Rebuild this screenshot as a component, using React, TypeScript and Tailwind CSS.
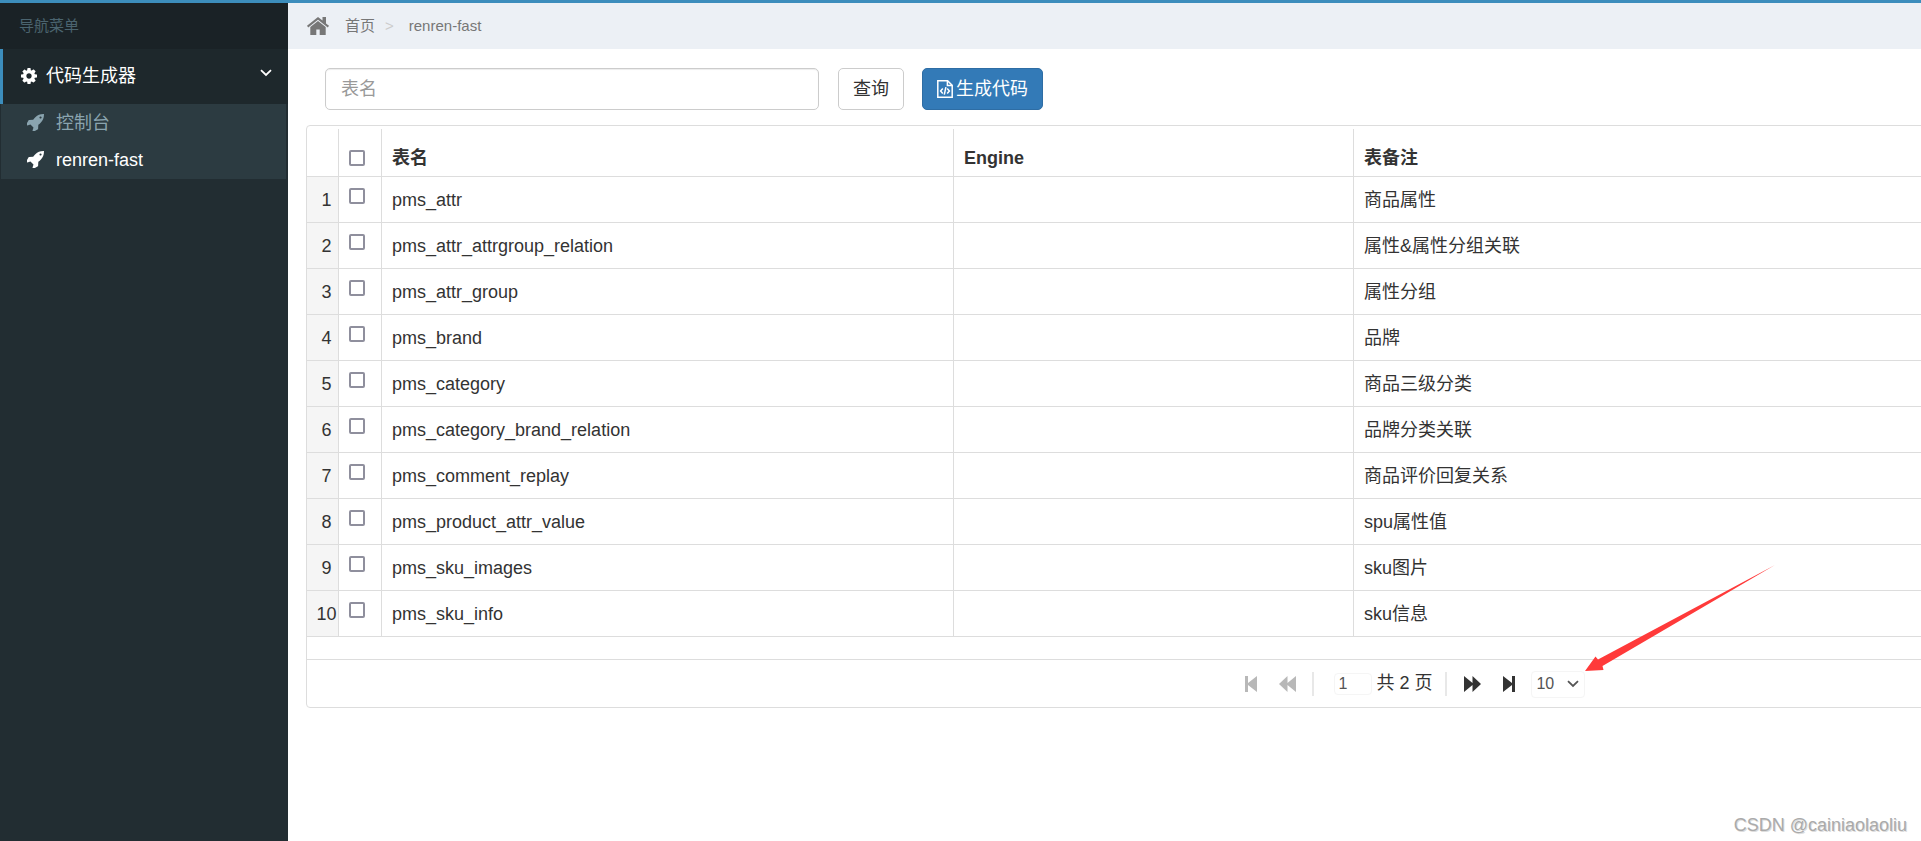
import { useState } from "react";

interface TableRow {
  name: string;
  engine: string;
  comment: string;
}

const rows: TableRow[] = [
  { name: "pms_attr", engine: "", comment: "商品属性" },
  { name: "pms_attr_attrgroup_relation", engine: "", comment: "属性&属性分组关联" },
  { name: "pms_attr_group", engine: "", comment: "属性分组" },
  { name: "pms_brand", engine: "", comment: "品牌" },
  { name: "pms_category", engine: "", comment: "商品三级分类" },
  { name: "pms_category_brand_relation", engine: "", comment: "品牌分类关联" },
  { name: "pms_comment_replay", engine: "", comment: "商品评价回复关系" },
  { name: "pms_product_attr_value", engine: "", comment: "spu属性值" },
  { name: "pms_sku_images", engine: "", comment: "sku图片" },
  { name: "pms_sku_info", engine: "", comment: "sku信息" }
];

const checkboxClass =
  "block h-4 w-4 appearance-none rounded-[2px] border-2 border-[#8f8f9d] bg-white checked:bg-[#337ab7]";

function RocketIcon() {
  return (
    <svg viewBox="96 128 1568 1568" className="h-[17px] w-[17px]" fill="currentColor">
      <path d="M1440 448q0-40-28-68t-68-28-68 28-28 68 28 68 68 28 68-28 28-68zm224-288q0 249-75.500 430.500t-253.500 360.500q-81 80-195 176l-20 379q-2 16-16 26l-384 224q-7 4-16 4-12 0-23-9l-64-64q-13-14-8-32l85-276-281-281-276 85q-3 1-9 1-14 0-23-9l-64-64q-17-19-5-39l224-384q10-14 26-16l379-20q96-114 176-195 188-187 358-258t431-71q14 0 24 9.500t10 22.500z" />
    </svg>
  );
}

function GearIcon() {
  return (
    <svg viewBox="128 128 1536 1536" className="h-4 w-4" fill="currentColor">
      <path d="M1152 896q0-106-75-181t-181-75-181 75-75 181 75 181 181 75 181-75 75-181zm512-109v222q0 12-8 23t-20 13l-185 28q-19 54-39 91 35 50 107 138 10 12 10 25t-9 23q-27 37-99 108t-94 71q-12 0-26-9l-138-108q-44 23-91 38-16 136-29 186-7 28-36 28h-222q-14 0-24.500-8.500t-11.500-21.500l-28-184q-49-16-90-37l-141 107q-10 9-25 9-14 0-25-11-126-114-165-168-7-10-7-23 0-12 8-23 15-21 51-66.500t54-70.500q-27-50-41-99l-183-27q-13-2-21-12.500t-8-23.500v-222q0-12 8-23t19-13l186-28q14-46 39-92-40-57-107-138-10-12-10-24 0-10 9-23 26-36 98.500-107.500t94.500-71.500q13 0 26 10l138 107q44-23 91-38 16-136 29-186 7-28 36-28h222q14 0 24.500 8.500t11.500 21.500l28 184q49 16 90 37l142-107q9-9 24-9 13 0 25 10 129 119 165 170 7 8 7 22 0 12-8 23-15 21-51 66.500t-54 70.500q26 50 41 98l183 28q13 2 21 12.500t8 23.500z" />
    </svg>
  );
}

function Sidebar() {
  return (
    <aside className="w-72 shrink-0 bg-[#222d32]">
      <div className="flex h-[46px] items-center bg-[#1a2226] pl-[19px] text-[15px] text-[#4b646f]">
        导航菜单
      </div>
      <nav>
        <a
          href="#generator"
          className="flex h-[55px] items-center border-l-3 border-[#3c8dbc] bg-[#1e282c] pr-4 pb-[2px] pl-[18px] text-white"
        >
          <GearIcon />
          <span className="ml-[9px] flex-1">代码生成器</span>
          <svg viewBox="0 0 12 8" className="mb-[6px] h-2 w-3" fill="none" stroke="currentColor" strokeWidth="1.800">
            <path d="M1 1.200 6 6l5-4.800" />
          </svg>
        </a>
        <ul className="mr-[2px] ml-px bg-[#2c3b41] pb-px">
          <li>
            <a href="#console" className="flex h-[37px] items-center pl-[26px] text-[#8aa4af]">
              <RocketIcon />
              <span className="ml-3">控制台</span>
            </a>
          </li>
          <li>
            <a href="#renren-fast" className="flex h-[37px] items-center pl-[26px] text-white">
              <RocketIcon />
              <span className="ml-3">renren-fast</span>
            </a>
          </li>
        </ul>
      </nav>
    </aside>
  );
}

function Breadcrumb() {
  return (
    <div className="flex h-[46px] items-center bg-[#ecf0f5] pb-px pl-[19px] text-[15px] text-[#777]">
      <svg viewBox="0 0 22 18" className="h-[18px] w-[22px]" fill="currentColor">
        <path d="M11 0 0 8.800 1.200 10.600 11 2.700l9.800 7.900L22 8.800l-3-2.400V0h-3.500v3.600z" />
        <path d="M11 3.900 3.300 10.100V18h6v-5.400h3.400V18h6v-7.900z" />
      </svg>
      <a href="#home" className="ml-4">
        首页
      </a>
      <span className="ml-[10px] text-[#ccc]">&gt;</span>
      <span className="ml-[15px]">renren-fast</span>
    </div>
  );
}

function Pager() {
  const [page, setPage] = useState("1");

  return (
    <div className="flex h-12 items-center justify-center border-t border-[#ddd] pt-px pr-[2px]">
      <div className="flex items-center">
        <button type="button" aria-label="First" className="text-[#b8b8b8]">
          <svg viewBox="0 0 12 18" className="h-[18px] w-3" fill="currentColor">
            <path d="M0 1h3v7L12 1v16L3 10v7H0z" />
          </svg>
        </button>
        <button type="button" aria-label="Previous" className="ml-[22px] text-[#b8b8b8]">
          <svg viewBox="0 0 17 18" className="h-[18px] w-[17px]" fill="currentColor">
            <path d="M0 9l8.500-8v7L17 1v16l-8.500-7v7z" />
          </svg>
        </button>
        <span className="ml-4 h-6 w-[2px] bg-[#e8e8e8]" />
        <input
          aria-label="Page"
          value={page}
          onChange={(event) => setPage(event.target.value)}
          className="ml-5 h-[22px] w-[38px] rounded-sm border border-[#f5f5f5] pl-[3px] text-base text-[#555]"
        />
        <span className="ml-1 pb-[2px]">共 2 页</span>
        <span className="ml-[13px] h-6 w-[2px] bg-[#e8e8e8]" />
        <button type="button" aria-label="Next" className="ml-[17px]">
          <svg viewBox="0 0 17 18" className="h-[18px] w-[17px]" fill="currentColor">
            <path d="M17 9 8.500 1v7L0 1v16l8.500-7v7z" />
          </svg>
        </button>
        <button type="button" aria-label="Last" className="ml-[22px]">
          <svg viewBox="0 0 12 18" className="h-[18px] w-3" fill="currentColor">
            <path d="M12 1H9v7L0 1v16l9-7v7h3z" />
          </svg>
        </button>
        <div className="relative ml-4 flex items-center">
          <select
            aria-label="Rows per page"
            defaultValue="10"
            className="h-[27px] w-[54px] appearance-none rounded-sm border border-[#f5f5f5] pl-1 text-base leading-6 text-[#555]"
          >
            <option>10</option>
            <option>30</option>
            <option>50</option>
          </select>
          <svg
            viewBox="0 0 12 8"
            className="pointer-events-none absolute right-[6px] h-2 w-3"
            fill="none"
            stroke="#555"
            strokeWidth="1.800"
          >
            <path d="M1 1.200 6 6l5-4.800" />
          </svg>
          {/* arrow pointing at the page size menu */}
          <svg
            viewBox="0 0 190 106"
            className="pointer-events-none absolute bottom-full left-full h-[106px] w-[190px]"
            fill="#ff3a3a"
          >
            <path d="M0 106 10.500 91.500 13 94.500 190 0 17.500 101 18.500 105z" />
          </svg>
        </div>
      </div>
    </div>
  );
}

function TableGrid() {
  const [selected, setSelected] = useState<number[]>([]);

  const toggle = (index: number) =>
    setSelected((prev) => (prev.includes(index) ? prev.filter((i) => i !== index) : [...prev, index]));

  return (
    <div className="mt-[15px] ml-[18px] w-[136%] rounded-[4px] border border-[#ddd] pt-[3px]">
      <table className="w-full table-fixed border-separate border-spacing-0 text-left">
        <colgroup>
          <col className="w-8" />
          <col className="w-[43px]" />
          <col className="w-[572px]" />
          <col className="w-[400px]" />
          <col />
        </colgroup>
        <thead>
          <tr className="h-12">
            <th className="border-r border-b border-[#ddd]" />
            <th className="border-r border-b border-[#ddd] pt-[11px] pl-[10px]">
              <input
                type="checkbox"
                aria-label="Select all"
                checked={selected.length === rows.length}
                onChange={(event) => setSelected(event.target.checked ? rows.map((_, i) => i) : [])}
                className={checkboxClass}
              />
            </th>
            <th className="border-r border-b border-[#ddd] pt-[11px] pl-[10px]">表名</th>
            <th className="border-r border-b border-[#ddd] pt-[11px] pl-[10px]">Engine</th>
            <th className="border-b border-[#ddd] pt-[11px] pl-[10px]">表备注</th>
          </tr>
        </thead>
        <tbody>
          {rows.map((row, index) => (
            <tr key={row.name} className="h-[46px]">
              <td className="border-r border-b border-[#ddd] bg-[#f5f5f5] pl-2 text-center">{index + 1}</td>
              <td className="border-r border-b border-[#ddd] pb-2 pl-[10px]">
                <input
                  type="checkbox"
                  aria-label={row.name}
                  checked={selected.includes(index)}
                  onChange={() => toggle(index)}
                  className={checkboxClass}
                />
              </td>
              <td className="border-r border-b border-[#ddd] pl-[10px]">{row.name}</td>
              <td className="border-r border-b border-[#ddd] pl-[10px]">{row.engine}</td>
              <td className="border-b border-[#ddd] pl-[10px]">{row.comment}</td>
            </tr>
          ))}
        </tbody>
      </table>
      <div className="h-[22px]" />
      <Pager />
    </div>
  );
}

export default function App() {
  return (
    <div className="flex min-h-screen flex-col overflow-hidden border-t-3 border-[#3c8dbc] bg-white font-['Liberation_Sans','Noto_Sans_CJK_SC',sans-serif] text-[18px] leading-6 text-[#333]">
      <div className="flex flex-1">
        <Sidebar />
        <main className="relative min-w-0 flex-1 overflow-hidden">
          <Breadcrumb />
          <form className="mt-[19px] flex items-center pl-[37px]" onSubmit={(event) => event.preventDefault()}>
            <input
              type="text"
              aria-label="表名"
              placeholder="表名"
              className="h-[42px] w-[494px] rounded-[5px] border border-[#ccc] px-[15px] shadow-[inset_0_1px_1px_rgba(0,0,0,0.075)] placeholder:text-[#999]"
            />
            <button type="submit" className="ml-[19px] h-[42px] rounded-[5px] border border-[#ccc] px-[14px]">
              查询
            </button>
            <button
              type="button"
              className="ml-[18px] flex h-[42px] items-center gap-[3px] rounded-[5px] border border-[#2e6da4] bg-[#337ab7] px-[14px] text-white"
            >
              <svg viewBox="0 0 16 18" className="h-[18px] w-4" fill="none" stroke="currentColor" strokeWidth="1.500">
                <path d="M.8.8h9.800l4.600 4.600v11.800H.8z" />
                <path d="M10.400.8v4.800h4.800" />
                <path d="M5.800 8.500 3.600 11l2.200 2.500M10.200 8.500l2.200 2.500-2.200 2.500M8.900 7.200 7.300 14.600" />
              </svg>
              生成代码
            </button>
          </form>
          <TableGrid />
          <p className="absolute right-[14px] bottom-1 text-[18px] text-[#aaa] [text-shadow:1px_1px_0_#ddd]">
            CSDN @cainiaolaoliu
          </p>
        </main>
      </div>
    </div>
  );
}
